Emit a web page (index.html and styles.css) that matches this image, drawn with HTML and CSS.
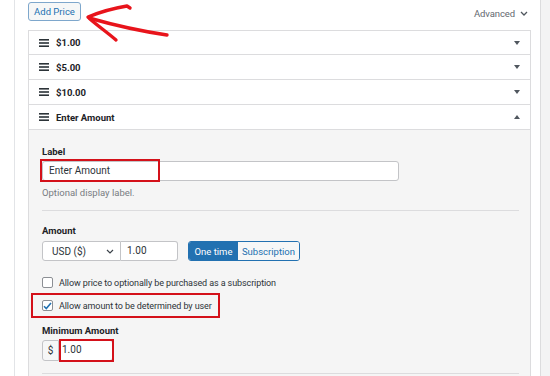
FILE: index.html
```html
<!DOCTYPE html>
<html>
<head>
<meta charset="utf-8">
<link rel="stylesheet" href="styles.css">
</head>
<body>
<div class="page">
  <div class="gutter"></div>
  <div class="main">
    <div class="topbar">
      <button class="btn-add">Add Price</button>
      <div class="advanced">Advanced <svg class="chev" width="8" height="5" viewBox="0 0 8 5"><path d="M1 1l3 3 3-3" fill="none" stroke="#50575e" stroke-width="1.3"/></svg></div>
    </div>
    <div class="list">
      <div class="row">
        <svg class="ham" width="10" height="8" viewBox="0 0 10 8"><rect y="0" width="10" height="1.6"/><rect y="3.2" width="10" height="1.6"/><rect y="6.4" width="10" height="1.6"/></svg>
        <span class="row-title">$1.00</span>
        <span class="caret down"></span>
      </div>
      <div class="row">
        <svg class="ham" width="10" height="8" viewBox="0 0 10 8"><rect y="0" width="10" height="1.6"/><rect y="3.2" width="10" height="1.6"/><rect y="6.4" width="10" height="1.6"/></svg>
        <span class="row-title">$5.00</span>
        <span class="caret down"></span>
      </div>
      <div class="row">
        <svg class="ham" width="10" height="8" viewBox="0 0 10 8"><rect y="0" width="10" height="1.6"/><rect y="3.2" width="10" height="1.6"/><rect y="6.4" width="10" height="1.6"/></svg>
        <span class="row-title">$10.00</span>
        <span class="caret down"></span>
      </div>
      <div class="row">
        <svg class="ham" width="10" height="8" viewBox="0 0 10 8"><rect y="0" width="10" height="1.6"/><rect y="3.2" width="10" height="1.6"/><rect y="6.4" width="10" height="1.6"/></svg>
        <span class="row-title">Enter Amount</span>
        <span class="caret up"></span>
      </div>
      <div class="panel">
        <div class="field-label first-label">Label</div>
        <div class="label-input-wrap">
          <div class="text-input wide">Enter Amount</div>
          <div class="redbox rb-label"></div>
        </div>
        <div class="help">Optional display label.</div>
        <div class="divider"></div>
        <div class="field-label amount-label">Amount</div>
        <div class="amount-row">
          <div class="select">USD ($) <svg width="8" height="5" viewBox="0 0 8 5"><path d="M1 1l3 3 3-3" fill="none" stroke="#3c434a" stroke-width="1.2"/></svg></div>
          <div class="text-input price">1.00</div>
          <div class="btn-group">
            <span class="seg active">One time</span>
            <span class="seg">Subscription</span>
          </div>
        </div>
        <div class="check-row first">
          <span class="checkbox"></span>
          <span>Allow price to optionally be purchased as a subscription</span>
        </div>
        <div class="check-row second">
          <span class="checkbox checked"><svg width="9" height="8" viewBox="0 0 9 8"><path d="M1 4.2l2.3 2.3L8 1" fill="none" stroke="#2271b1" stroke-width="1.6"/></svg></span>
          <span>Allow amount to be determined by user</span>
          <div class="redbox rb-check"></div>
        </div>
        <div class="field-label min-label">Minimum Amount</div>
        <div class="min-row">
          <span class="prefix">$</span>
          <div class="text-input min">1.00</div>
          <div class="redbox rb-min"></div>
        </div>
        <div class="divider bottom"></div>
      </div>
    </div>
  </div>
  <div class="strip"></div>
</div>
<svg class="arrow" width="180" height="50" viewBox="0 0 180 50">
  <path d="M89 18 C 110 24, 140 31, 167 35" fill="none" stroke="#e8141b" stroke-width="3.4" stroke-linecap="round"/>
  <path d="M88 17 C 100 12, 115 8, 127 6 L 130 8" fill="none" stroke="#e8141b" stroke-width="3.4" stroke-linecap="round" stroke-linejoin="round"/>
  <path d="M90 19 C 98 26, 108 33, 116 40" fill="none" stroke="#e8141b" stroke-width="3.4" stroke-linecap="round"/>
</svg>
</body>
</html>
```

FILE: styles.css
```css
html, body {
  margin: 0;
  padding: 0;
  background: #ffffff;
}
body {
  width: 550px;
  height: 376px;
  overflow: hidden;
  position: relative;
  font-family: Roboto, "Liberation Sans", sans-serif;
  font-size: 9px;
  letter-spacing: -0.1px;
  color: #1d2327;
}
.page {
  display: flex;
  height: 376px;
}
.gutter {
  width: 14px;
  border-right: 1px solid #e2e4e7;
  background: #fff;
}
.main {
  flex: 1;
  padding: 2px 9px 0 13px;
  display: flex;
  flex-direction: column;
}
.strip {
  width: 9px;
  border-left: 1px solid #dcdcde;
  background: #f3f3f4;
}
.topbar {
  display: flex;
  justify-content: space-between;
  align-items: flex-start;
  height: 28px;
}
.btn-add {
  height: 19px;
  width: 53px;
  padding: 0;
  border: 1px solid #7ea7cc;
  border-radius: 3px;
  background: #f6f7f7;
  color: #2271b1;
  font-family: inherit;
  font-size: 9.5px;
  letter-spacing: 0;
  line-height: 17px;
}
.advanced {
  margin-top: 6px;
  margin-right: 3px;
  color: #646970;
  font-size: 9.5px;
  display: flex;
  align-items: center;
  gap: 5px;
}
.list {
  border: 1px solid #dcdcde;
  border-bottom: none;
  flex: 1;
  display: flex;
  flex-direction: column;
}
.row {
  height: 24px;
  border-bottom: 1px solid #dcdcde;
  display: flex;
  align-items: center;
  padding: 0 10px;
  background: #fff;
}
.row:first-child {
  height: 23px;
}
.ham {
  fill: #2c3338;
  margin-right: 7px;
}
.row-title {
  font-weight: 700;
  font-size: 9.5px;
  letter-spacing: 0;
  flex: 1;
}
.caret {
  width: 0;
  height: 0;
  border-left: 3px solid transparent;
  border-right: 3px solid transparent;
}
.caret.down {
  border-top: 4px solid #50575e;
}
.caret.up {
  border-bottom: 4px solid #50575e;
}
.panel {
  flex: 1;
  background: #f5f5f5;
  padding: 16px 11px 0 13px;
}
.field-label {
  font-weight: 700;
  font-size: 9.5px;
  letter-spacing: 0;
  line-height: 12px;
  margin-bottom: 4px;
}
.field-label.first-label {
  margin-bottom: 3px;
}
.text-input {
  box-sizing: border-box;
  height: 20px;
  background: #fff;
  border: 1px solid #c3c4c7;
  border-radius: 3px;
  padding: 0 6px;
  line-height: 18px;
  font-size: 10px;
  letter-spacing: 0;
  color: #2c3338;
}
.label-input-wrap {
  position: relative;
  width: 357px;
}
.text-input.wide {
  width: 357px;
}
.redbox {
  position: absolute;
  border: 2px solid #d4111a;
  box-sizing: border-box;
  pointer-events: none;
}
.rb-label {
  left: -2px;
  top: -2px;
  width: 120px;
  height: 23px;
}
.help {
  color: #787c82;
  font-size: 9.5px;
  letter-spacing: 0;
  margin-top: 6px;
  line-height: 12px;
}
.divider {
  height: 1px;
  background: #dcdcde;
  margin-top: 11px;
}
.amount-label {
  margin-top: 14px;
}
.amount-row {
  display: flex;
  align-items: center;
  height: 20px;
}
.select {
  box-sizing: border-box;
  width: 79px;
  height: 20px;
  background: #fff;
  border: 1px solid #c3c4c7;
  border-radius: 3px 0 0 3px;
  padding: 0 6px 0 9px;
  display: flex;
  align-items: center;
  justify-content: space-between;
  font-size: 10px;
  letter-spacing: 0;
  color: #2c3338;
}
.text-input.price {
  width: 57px;
  border-left: none;
  border-radius: 0 3px 3px 0;
}
.btn-group {
  display: flex;
  margin-left: 10px;
  height: 20px;
  width: 112px;
  border: 1px solid #2271b1;
  border-radius: 3px;
  box-sizing: border-box;
  overflow: hidden;
}
.seg {
  display: flex;
  align-items: center;
  justify-content: center;
  flex: 1;
  font-size: 9.5px;
  letter-spacing: 0;
  color: #2271b1;
  background: #f6f7f7;
}
.seg.active {
  flex: 0 0 49px;
  background: #2271b1;
  color: #fff;
}
.check-row {
  display: flex;
  align-items: center;
  gap: 6px;
  font-size: 9px;
  color: #2c3338;
  position: relative;
}
.check-row.first {
  margin-top: 16px;
}
.check-row.second {
  margin-top: 12px;
}
.checkbox {
  box-sizing: border-box;
  width: 11px;
  height: 11px;
  border: 1px solid #8c8f94;
  border-radius: 2px;
  background: #fff;
  display: flex;
  align-items: center;
  justify-content: center;
}
.rb-check {
  left: -11px;
  top: -7px;
  width: 189px;
  height: 25px;
}
.min-label {
  margin-top: 14px;
  margin-bottom: 3px;
}
.min-row {
  display: flex;
  position: relative;
  height: 21px;
}
.prefix {
  box-sizing: border-box;
  width: 17px;
  height: 21px;
  border: 1px solid #c3c4c7;
  border-radius: 3px 0 0 3px;
  background: #f6f7f7;
  display: flex;
  align-items: center;
  justify-content: center;
  font-size: 10px;
  color: #2c3338;
}
.text-input.min {
  width: 54px;
  height: 21px;
  border-left: none;
  border-radius: 0 3px 3px 0;
  padding-left: 3px;
}
.rb-min {
  left: 17px;
  top: -1px;
  width: 55px;
  height: 23px;
}
.divider.bottom {
  margin-top: 12px;
}
.arrow {
  position: absolute;
  left: 0;
  top: 0;
}
```
